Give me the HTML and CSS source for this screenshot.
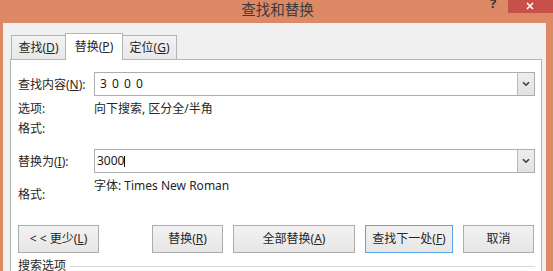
FILE: index.html
```html
<!DOCTYPE html>
<html lang="zh-CN">
<head>
<meta charset="utf-8">
<title>查找和替换</title>
<link rel="stylesheet" href="styles.css">
</head>
<body>
<div class="window">
  <div class="titlebar">
    <div class="title">查找和替换</div>
    <div class="help">?</div>
    <div class="close">
      <svg width="8" height="8" viewBox="0 0 8 8"><path d="M1 1 L7 7 M7 1 L1 7" stroke="#fff" stroke-width="1.5" fill="none"/></svg>
    </div>
  </div>
  <div class="client">
    <div class="tabs">
      <div class="tab first">查找(<u>D</u>)</div>
      <div class="tab active">替换(<u>P</u>)</div>
      <div class="tab last">定位(<u>G</u>)</div>
    </div>
    <div class="panel">
      <div class="row row-field">
        <div class="label">查找内容(<u>N</u>):</div>
        <div class="combo">
          <div class="combo-text spaced">3 0 0 0</div>
          <div class="dd"><svg width="8" height="6" viewBox="0 0 8 6"><path d="M1 1.2 L4 4.2 L7 1.2" stroke="#3a3a3a" stroke-width="1.6" fill="none"/></svg></div>
        </div>
      </div>
      <div class="row row-line">
        <div class="label">选项:</div>
        <div class="value">向下搜索, 区分全/半角</div>
      </div>
      <div class="row row-line">
        <div class="label">格式:</div>
      </div>
      <div class="row row-field row-repl">
        <div class="label">替换为(<u>I</u>):</div>
        <div class="combo">
          <div class="combo-text tight">3000<span class="caret"></span></div>
          <div class="dd"><svg width="8" height="6" viewBox="0 0 8 6"><path d="M1 1.2 L4 4.2 L7 1.2" stroke="#3a3a3a" stroke-width="1.6" fill="none"/></svg></div>
        </div>
      </div>
      <div class="row row-fmt2">
        <div class="label low">格式:</div>
        <div class="value">字体: Times New Roman</div>
      </div>
      <div class="buttons">
        <div class="btn b-less">&lt; &lt; 更少(<u>L</u>)</div>
        <div class="btn b-repl">替换(<u>R</u>)</div>
        <div class="btn b-all">全部替换(<u>A</u>)</div>
        <div class="btn b-next default">查找下一处(<u>F</u>)</div>
        <div class="btn b-cancel">取消</div>
      </div>
      <div class="group">
        <span class="group-label">搜索选项</span>
        <span class="group-line"></span>
      </div>
    </div>
  </div>
</div>
</body>
</html>
```
FILE: styles.css
```css
html, body {
  margin: 0;
  padding: 0;
}
body {
  width: 553px;
  height: 271px;
  overflow: hidden;
  font-family: "Noto Sans", "Noto Sans CJK SC", sans-serif;
  font-size: 12px;
  color: #262626;
}
u {
  text-decoration: underline;
  text-underline-offset: 1px;
}
.window {
  width: 553px;
  height: 271px;
  background: #dd8965;
  display: flex;
  flex-direction: column;
  overflow: hidden;
}
.titlebar {
  position: relative;
  height: 23px;
  flex: none;
}
.title {
  text-align: center;
  font-size: 14.5px;
  line-height: 18px;
  color: #3a3a3a;
  padding-left: 2px;
}
.help {
  position: absolute;
  left: 490px;
  top: -5px;
  font-size: 13px;
  font-weight: bold;
  color: #333;
  line-height: 16px;
}
.close {
  position: absolute;
  left: 508px;
  top: 0;
  width: 45px;
  height: 13px;
  background: #c8504b;
  display: flex;
  align-items: center;
  justify-content: center;
}
.close svg {
  margin-top: -2px;
  margin-left: -2px;
}
.client {
  flex: 1;
  margin: 0 7px 0 3px;
  background: #f0f0f0;
  padding: 9px 4px 0 7px;
  overflow: hidden;
}
.tabs {
  display: flex;
  align-items: flex-end;
  height: 27px;
  margin-left: 1px;
  position: relative;
  z-index: 1;
}
.tab {
  height: 24px;
  line-height: 24px;
  width: 54px;
  box-sizing: border-box;
  text-align: center;
  border: 1px solid #b4b4b4;
  border-bottom: none;
  background: linear-gradient(#f2f2f2, #e8e8e8);
}
.tab.first {
  border-right: none;
}
.tab.last {
  border-left: none;
}
.tab.active {
  width: 58px;
  height: 27px;
  line-height: 25px;
  background: #fff;
  margin-bottom: -1px;
}
.panel {
  background: #fff;
  border: 1px solid #b4b4b4;
  height: 240px;
  padding: 12px 6px 0 7px;
}
.row {
  display: flex;
  align-items: center;
}
.label {
  width: 76px;
  flex: none;
}
.row-field {
  height: 24px;
}
.row-line {
  height: 20px;
  line-height: 20px;
}
.row-line:first-of-type {
  margin-top: 3px;
}
.row-field + .row-line {
  margin-top: 3px;
}
.row-repl {
  margin-top: 10px;
}
.combo {
  flex: 1;
  height: 24px;
  box-sizing: border-box;
  border: 1px solid #abadb3;
  display: flex;
  align-items: stretch;
}
.combo-text {
  flex: 1;
  line-height: 22px;
  color: #1a1a1a;
  display: flex;
  align-items: center;
}
.combo-text.spaced {
  padding-left: 5px;
  word-spacing: 2px;
}
.combo-text.tight {
  padding-left: 2px;
}
.caret {
  display: inline-block;
  width: 1px;
  height: 11px;
  background: #000;
  margin-left: 0;
}
.dd {
  width: 16px;
  border-left: 1px solid #b9b9b9;
  background: linear-gradient(#eeeeee, #e2e2e2);
  display: flex;
  align-items: center;
  justify-content: center;
}
.row-fmt2 {
  margin-top: 3px;
  align-items: flex-start;
  line-height: 20px;
}
.label.low {
  padding-top: 9px;
}
.buttons {
  display: flex;
  margin-top: 20px;
  height: 28px;
}
.btn {
  box-sizing: border-box;
  height: 28px;
  line-height: 26px;
  text-align: center;
  border: 1px solid #adadad;
  background: linear-gradient(#f2f2f2, #e6e6e6);
  color: #262626;
}
.btn.default {
  border-color: #5aa5ea;
}
.b-less { width: 81px; }
.b-repl { width: 71px; margin-left: 53px; }
.b-all { width: 122px; margin-left: 10px; }
.b-next { width: 88px; margin-left: 10px; }
.b-cancel { width: 71px; margin-left: 10px; }
.group {
  display: flex;
  align-items: center;
  margin-top: 5px;
  line-height: 16px;
}
.group-label {
  flex: none;
}
.group-line {
  flex: 1;
  border-top: 1px solid #d9d9d9;
  margin-left: 4px;
}
```
